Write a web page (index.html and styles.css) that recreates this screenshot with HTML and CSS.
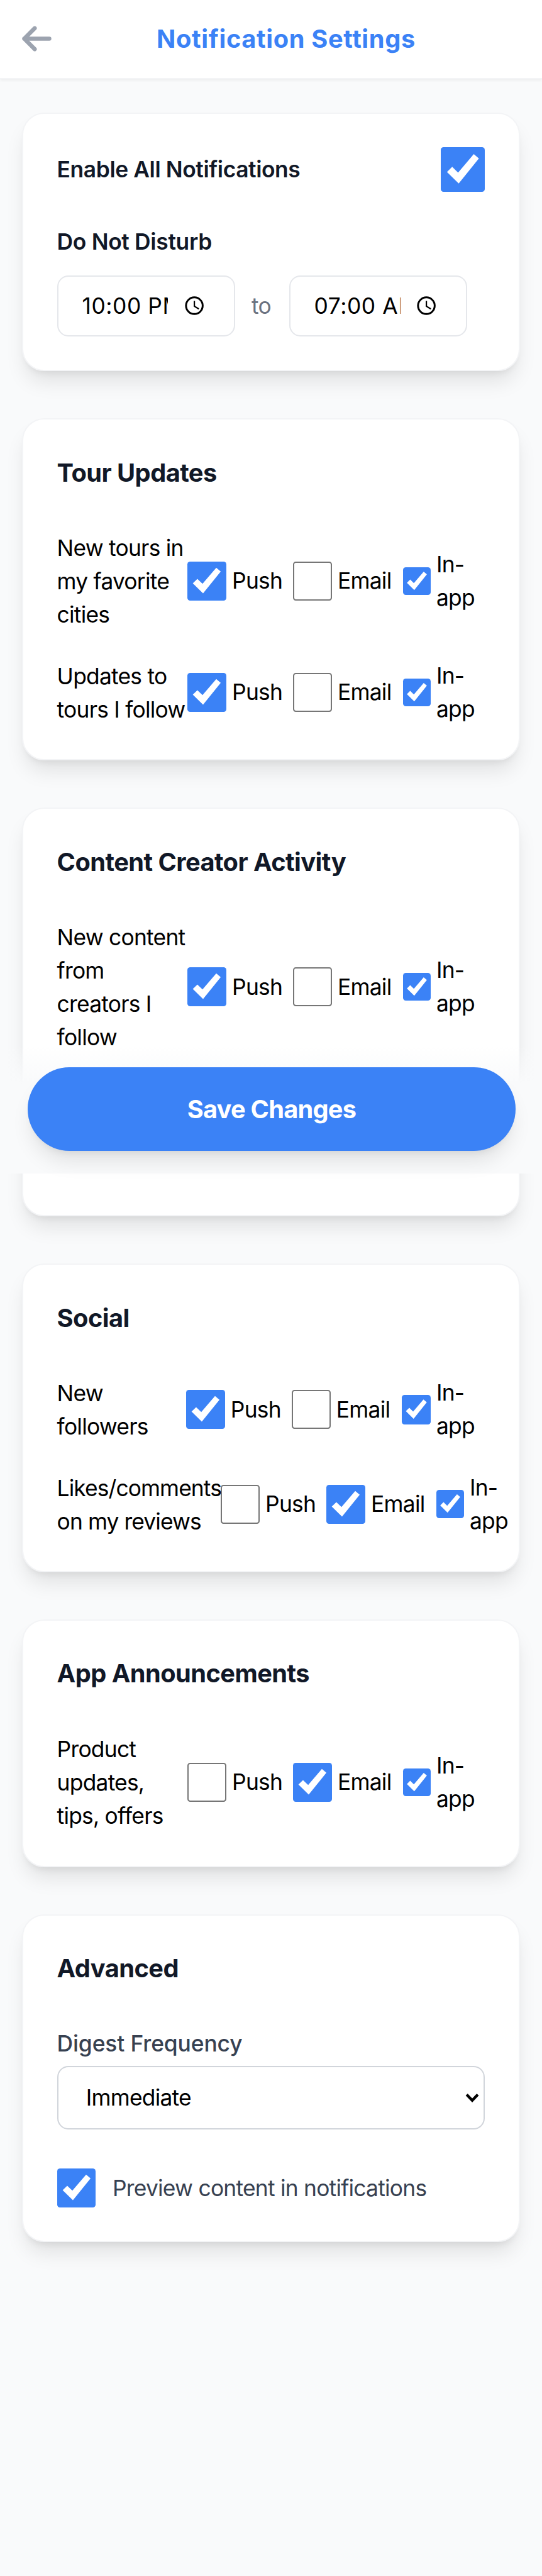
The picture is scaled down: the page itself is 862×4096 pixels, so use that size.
FILE: index.html
```
<!DOCTYPE html>
<html lang="en">
<head>
<meta charset="utf-8">
<title>Notification Settings</title>
<link rel="stylesheet" href="styles.css">
</head>
<body>
<svg class="defs" width="0" height="0" aria-hidden="true">
  <symbol id="tick" viewBox="0 0 28 28"><path d="M3.9 15.6 7.2 12.4 10.9 16 20.8 4.4 24 7.1 11.3 22.9Z" fill="#fff"/></symbol>
  <symbol id="clock" viewBox="0 0 20 20"><circle cx="10" cy="10" r="6" fill="none" stroke="#000" stroke-width="1.35"/><path d="M10 6.6V10.4L13.2 12.3" fill="none" stroke="#000" stroke-width="1"/></symbol>
</svg>

<header class="header">
  <svg class="back" viewBox="0 0 24 24"><path d="M10.5 19.5 3 12m0 0 7.5-7.5M3 12h18"/></svg>
  <h1 class="title">Notification Settings</h1>
</header>

<main class="main">
  <section class="card">
    <div class="between">
      <span class="strong">Enable All Notifications</span>
      <span class="box box-lg on"><svg><use href="#tick"/></svg></span>
    </div>
    <div class="dnd">
      <span class="strong strong-wide">Do Not Disturb</span>
      <div class="times">
        <div class="time"><span class="time-text">10:00 PM</span><svg class="clock"><use href="#clock"/></svg></div>
        <span class="to">to</span>
        <div class="time"><span class="time-text">07:00 AM</span><svg class="clock"><use href="#clock"/></svg></div>
      </div>
    </div>
  </section>

  <section class="card">
    <h2 class="heading">Tour Updates</h2>
    <div class="rows">
      <div class="row">
        <span class="label">New tours in<br>my favorite<br>cities</span>
        <div class="opts">
          <span class="opt push"><i class="box on"><svg><use href="#tick"/></svg></i>Push</span>
          <span class="opt email"><i class="box"></i>Email</span>
          <span class="opt"><i class="box box-sm on"><svg><use href="#tick"/></svg></i><span>In-<br>app</span></span>
        </div>
      </div>
      <div class="row">
        <span class="label">Updates to<br>tours I follow</span>
        <div class="opts">
          <span class="opt push"><i class="box on"><svg><use href="#tick"/></svg></i>Push</span>
          <span class="opt email"><i class="box"></i>Email</span>
          <span class="opt"><i class="box box-sm on"><svg><use href="#tick"/></svg></i><span>In-<br>app</span></span>
        </div>
      </div>
    </div>
  </section>

  <section class="card">
    <h2 class="heading">Content Creator Activity</h2>
    <div class="rows">
      <div class="row">
        <span class="label">New content<br>from<br>creators I<br>follow</span>
        <div class="opts">
          <span class="opt push"><i class="box on"><svg><use href="#tick"/></svg></i>Push</span>
          <span class="opt email"><i class="box"></i>Email</span>
          <span class="opt"><i class="box box-sm on"><svg><use href="#tick"/></svg></i><span>In-<br>app</span></span>
        </div>
      </div>
      <div class="row row-covered"><span class="label">comments</span></div>
    </div>
  </section>

  <section class="card">
    <h2 class="heading">Social</h2>
    <div class="rows">
      <div class="row">
        <span class="label label-followers">New<br>followers</span>
        <div class="opts">
          <span class="opt push"><i class="box on"><svg><use href="#tick"/></svg></i>Push</span>
          <span class="opt email"><i class="box"></i>Email</span>
          <span class="opt"><i class="box box-md on"><svg><use href="#tick"/></svg></i><span>In-<br>app</span></span>
        </div>
      </div>
      <div class="row">
        <span class="label label-likes">Likes/comments<br>on my reviews</span>
        <div class="opts">
          <span class="opt push"><i class="box"></i>Push</span>
          <span class="opt email"><i class="box on"><svg><use href="#tick"/></svg></i>Email</span>
          <span class="opt"><i class="box box-sm on"><svg><use href="#tick"/></svg></i><span>In-<br>app</span></span>
        </div>
      </div>
    </div>
  </section>

  <section class="card">
    <h2 class="heading">App Announcements</h2>
    <div class="rows">
      <div class="row">
        <span class="label">Product<br>updates,<br>tips, offers</span>
        <div class="opts">
          <span class="opt push"><i class="box"></i>Push</span>
          <span class="opt email"><i class="box on"><svg><use href="#tick"/></svg></i>Email</span>
          <span class="opt"><i class="box box-sm on"><svg><use href="#tick"/></svg></i><span>In-<br>app</span></span>
        </div>
      </div>
    </div>
  </section>

  <section class="card">
    <h2 class="heading">Advanced</h2>
    <div class="rows advanced">
      <div class="field">
        <span class="field-label">Digest Frequency</span>
        <div class="select"><span>Immediate</span><svg class="chevron" viewBox="0 0 10 8"><path d="M1 1.6 5 5.8 9 1.6"/></svg></div>
      </div>
      <div class="preview"><i class="box on"><svg><use href="#tick"/></svg></i><span>Preview content in notifications</span></div>
    </div>
  </section>
</main>

<div class="save-bar"><button class="save">Save Changes</button></div>
</body>
</html>
```

FILE: styles.css
```
/* 16 design units per rem; the design is 390 units wide */
:root { font-size: 35.364px; }
* { box-sizing: border-box; }
html, body { margin: 0; padding: 0; }
body {
  position: relative;
  height: 4096px;
  overflow: hidden;
  background: #f9fafb;
  color: #000;
  font: 400 1rem/1.5 Inter, "Liberation Sans", sans-serif;
  letter-spacing: -.0215rem;
}
.defs { position: absolute; }
h1, h2 { margin: 0; }
i { font-style: normal; }

.header {
  display: flex;
  align-items: center;
  height: 3.5625rem;
  padding: 0 1.05rem 0 .90625rem;
  background: #fff;
  border-bottom: .0625rem solid #f3f4f6;
  box-shadow: 0 .0625rem .125rem rgba(0, 0, 0, .05);
}
.back { flex: none; width: 1.5rem; height: 1.5rem; fill: none; stroke: #9ca3af; stroke-width: 3; stroke-linecap: round; stroke-linejoin: round; }
.title { flex: 1; text-align: center; font-size: 1.125rem; line-height: 1.75rem; font-weight: 700; letter-spacing: .0185rem; color: #3b82f6; white-space: nowrap; }

.main { display: flex; flex-direction: column; gap: 2.125rem; padding: 1.5rem 1rem 0; }
/* Borders snap to 2px; the padding carries the lost fraction */
.card {
  padding: calc(1.5rem + .28px) calc(1.5rem + .21px);
  background: #fff;
  border: .0625rem solid #f3f4f6;
  border-radius: 1rem;
  box-shadow: 0 .625rem .9375rem -.1875rem rgba(0, 0, 0, .1), 0 .25rem .375rem -.25rem rgba(0, 0, 0, .1);
}
.between { display: flex; align-items: center; justify-content: space-between; }
.strong { font-weight: 600; letter-spacing: -.0115rem; color: #111827; }
.strong-wide { letter-spacing: -.009rem; }
.dnd { display: flex; flex-direction: column; gap: .75rem; margin-top: 1.5rem; }
.times { display: flex; align-items: center; }
.time {
  display: flex;
  align-items: center;
  width: 8rem;
  height: 2.75rem;
  padding-left: 1.07rem;
  border: .0625rem solid #e5e7eb;
  border-radius: .5rem;
}
.time-text { width: 3.875rem; overflow: hidden; white-space: nowrap; letter-spacing: .0165rem; }
.clock { width: 1.25rem; height: 1.25rem; margin-left: .56rem; }
.to { width: 2.4375rem; padding-left: .75rem; color: #6b7280; }

.heading { font-size: 1.125rem; line-height: 1.75rem; font-weight: 700; letter-spacing: -.0155rem; color: #111827; }
.rows { display: flex; flex-direction: column; gap: 1.25rem; margin-top: 1.75rem; }
.row { display: flex; align-items: center; }
.row-covered { height: 4.5rem; align-items: flex-end; }
.label { flex: none; width: 5.875rem; margin: 1px 0 -1px; white-space: nowrap; }
.label-followers { width: 5.8125rem; }
.label-likes { width: 7.375rem; letter-spacing: -.0255rem; }
.opts { display: flex; gap: .5rem; }
.opt { display: flex; align-items: center; gap: .25rem; flex: none; white-space: nowrap; }
.push { width: 4.25rem; }
.email { width: 4.4375rem; }

.box { display: block; flex: none; width: 1.75rem; height: 1.75rem; border: .0625rem solid #767676; border-radius: .125rem; background: #fff; }
.box svg { display: block; width: 100%; height: 100%; }
.box.on { border: 0; background: #3b82f6; }
.box-lg { width: 2rem; height: 2rem; }
.box-sm { width: 1.25rem; height: 1.25rem; }
.box-md { width: 1.3125rem; height: 1.3125rem; }

.advanced { color: #374151; }
.rows.advanced { gap: 1.75rem; }
.field { display: flex; flex-direction: column; gap: .25rem; }
.field-label { font-weight: 500; letter-spacing: -.003rem; }
.select {
  display: flex;
  align-items: center;
  justify-content: space-between;
  height: 2.875rem;
  padding: 0 .2rem 0 1.25rem;
  border: .0625rem solid #d1d5db;
  border-radius: .5rem;
  color: #000;
}
.chevron { width: .625rem; height: .5rem; fill: none; stroke: #000; stroke-width: 2; }
.preview { display: flex; align-items: center; gap: .75rem; }

/* Bar pinned to the bottom of the first 844-unit screen, over the cards */
.save-bar {
  position: absolute;
  top: 47rem;
  left: 0;
  right: 0;
  display: flex;
  justify-content: center;
  padding: 1rem 0 calc(1rem + .7px) .056rem;
  background: linear-gradient(to bottom, rgba(249, 250, 251, 0), #f9fafb 30%);
}
.save {
  width: 21.95rem;
  height: 3.75rem;
  border: 0;
  border-radius: 1.875rem;
  background: #3b82f6;
  color: #fff;
  font: 700 1.125rem/1.75rem Inter, "Liberation Sans", sans-serif;
  letter-spacing: -.0215rem;
  box-shadow: 0 .625rem .9375rem -.1875rem rgba(0, 0, 0, .1), 0 .25rem .375rem -.25rem rgba(0, 0, 0, .1);
}
```
